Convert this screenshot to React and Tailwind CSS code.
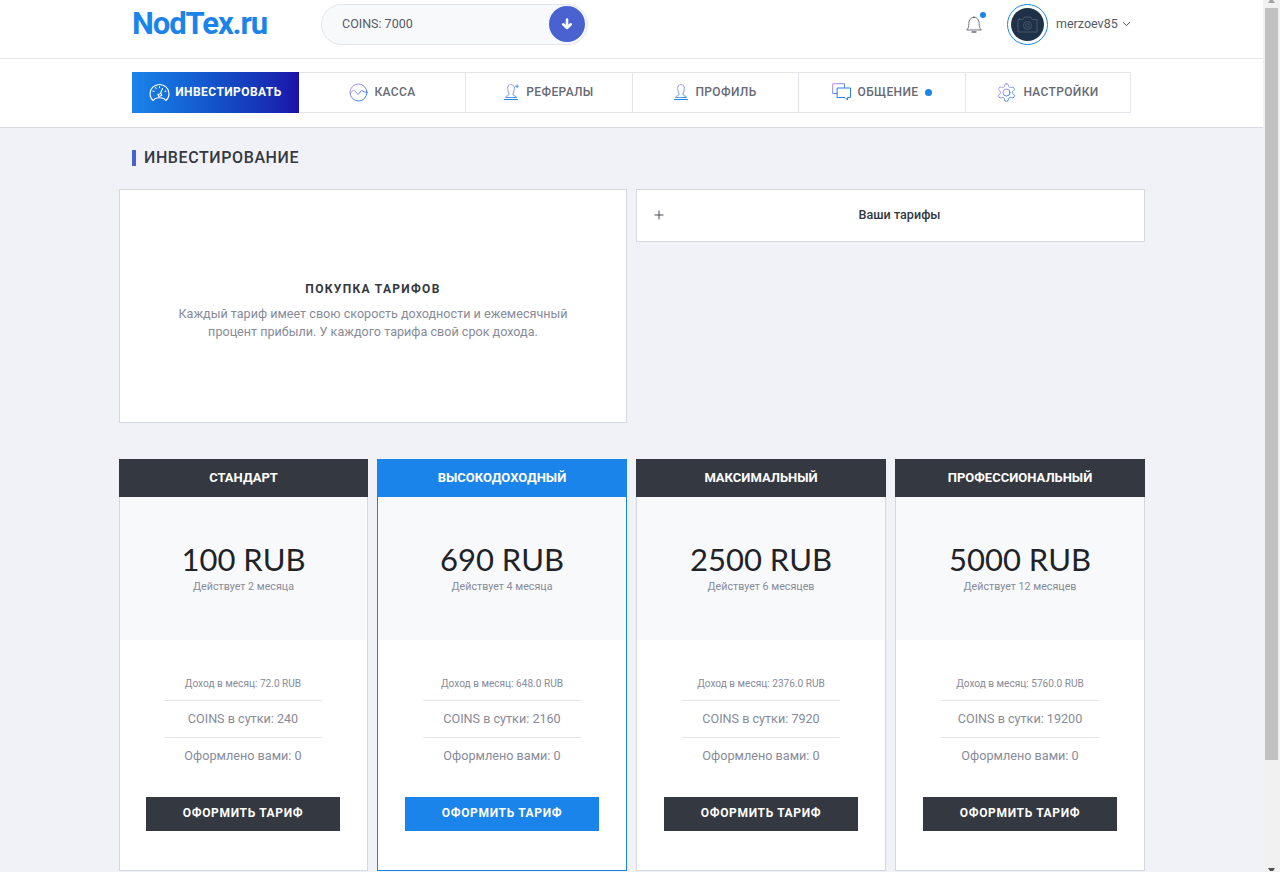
import React from "react";

const Grad = () => (
  <svg width="0" height="0" className="absolute">
    <defs>
      <linearGradient id="ig" x1="0" y1="0" x2="1" y2="1">
        <stop offset="0" stopColor="#c58fe8" />
        <stop offset="1" stopColor="#1a84ea" />
      </linearGradient>
    </defs>
  </svg>
);

const base = { fill: "none", stroke: "url(#ig)", strokeWidth: 1, strokeLinecap: "round", strokeLinejoin: "round" };

const Gauge = () => (
  <svg width="21" height="19" viewBox="0 0 21 19" fill="none" stroke="#fff" strokeWidth="1.1" strokeLinecap="round" strokeLinejoin="round">
    <path d="M4 17.5C2 15.8 1 13.4 1 10.8 1 5.6 5.2 1.5 10.5 1.5S20 5.6 20 10.8c0 2.6-1 5-3 6.7-1-.9-1.6-1.6-2.4-2-1.2-.6-2.6-.8-4.1-.8s-2.900.2-4.100.8c-.8.4-1.400 1.100-2.400 2z" />
    <path d="M9 11.500l3-1 .8 2-3 1zM11.500 10.500l2-5M4 8l1 .5M6.500 4.500l.7.8M10.500 3.500v1M17 8l-1 .5" />
  </svg>
);
const Wave = () => (
  <svg width="19" height="19" viewBox="0 0 19 19" {...base}>
    <circle cx="9.500" cy="9.500" r="8.500" />
    <path d="M1.500 10.500c1.500-3 3-4 4.500-2.500s2 3.500 3.500 3 2-4 3.500-3.500 2 2.500 5 1.500" />
  </svg>
);
const Person = ({ plus }) => (
  <svg width={plus ? 15 : 14} height="16" viewBox={plus ? "0 0 15 16" : "0 0 14 16"} {...base}>
    <path d="M4.200 2C4.900 1 6 .6 7 .6s2.100.4 2.800 1.400c.8 1.200.6 3.300.2 4.900-.3 1.200-1 2-1 3.100 0 1 .6 1.500 1.800 2 1.300.4 1.700.8 1.700 1.500H1.500c0-.7.400-1.100 1.700-1.500 1.200-.5 1.800-1 1.800-2 0-1.100-.7-1.900-1-3.100C3.600 5.300 3.400 3.200 4.200 2z" strokeWidth="0.9" />
    <path d="M.5 15.500h13" stroke="#1a84ea" />
    {plus && <path d="M13 1v2.500M11.700 2.200h2.600" stroke="#1a84ea" strokeWidth="0.8" />}
  </svg>
);
const Chat = () => (
  <svg width="19" height="18" viewBox="0 0 19 18" {...base}>
    <path d="M5 10.500H.7V.7h11.800v4" />
    <path d="M5.500 5h13v9.500h-3v2.500l-2.500-2.500H5.500z" stroke="#2f7fe8" />
  </svg>
);
const Gear = () => (
  <svg width="21" height="21" viewBox="0 0 24 24" className="-mx-[1px]" fill="none" stroke="url(#ig)" strokeWidth="1.100" strokeLinecap="round" strokeLinejoin="round">
    <circle cx="12" cy="12" r="4" />
    <path d="M12.220 2h-.44a2 2 0 0 0-2 2v.180a2 2 0 0 1-1 1.730l-.43.250a2 2 0 0 1-2 0l-.150-.080a2 2 0 0 0-2.730.730l-.220.380a2 2 0 0 0 .730 2.730l.150.100a2 2 0 0 1 1 1.720v.510a2 2 0 0 1-1 1.740l-.150.090a2 2 0 0 0-.730 2.730l.220.380a2 2 0 0 0 2.730.730l.150-.080a2 2 0 0 1 2 0l.430.250a2 2 0 0 1 1 1.730V20a2 2 0 0 0 2 2h.440a2 2 0 0 0 2-2v-.180a2 2 0 0 1 1-1.730l.430-.250a2 2 0 0 1 2 0l.150.080a2 2 0 0 0 2.730-.730l.220-.390a2 2 0 0 0-.730-2.730l-.150-.080a2 2 0 0 1-1-1.740v-.500a2 2 0 0 1 1-1.740l.150-.090a2 2 0 0 0 .730-2.730l-.220-.380a2 2 0 0 0-2.730-.730l-.150.080a2 2 0 0 1-2 0l-.430-.250a2 2 0 0 1-1-1.730V4a2 2 0 0 0-2-2z" />
  </svg>
);

const navItems = [
  { label: "КАССА", icon: <Wave />, w: "w-[167px]" },
  { label: "РЕФЕРАЛЫ", icon: <Person plus />, w: "w-[167px]" },
  { label: "ПРОФИЛЬ", icon: <Person />, w: "w-[166px]" },
  { label: "ОБЩЕНИЕ", icon: <Chat />, w: "w-[167px]", dot: true },
  { label: "НАСТРОЙКИ", icon: <Gear />, w: "w-[165px]" },
];

const plans = [
  { name: "СТАНДАРТ", price: "100 RUB", term: "Действует 2 месяца", income: "72.0", coins: "240", first: true },
  { name: "ВЫСОКОДОХОДНЫЙ", price: "690 RUB", term: "Действует 4 месяца", income: "648.0", coins: "2160", hot: true },
  { name: "МАКСИМАЛЬНЫЙ", price: "2500 RUB", term: "Действует 6 месяцев", income: "2376.0", coins: "7920" },
  { name: "ПРОФЕССИОНАЛЬНЫЙ", price: "5000 RUB", term: "Действует 12 месяцев", income: "5760.0", coins: "19200" },
];

function Plan({ p }) {
  return (
    <div className={`flex h-[412px] flex-col border bg-white ${p.hot ? "border-[#1a84ea]" : "border-[#d5d8e0]"}`}>
      <div className={`-mx-px -mt-px flex h-[38px] shrink-0 items-center justify-center text-[13px] font-bold text-white ${p.hot ? "bg-[#1a84ea]" : "bg-[#343840]"}`}>
        {p.name}
      </div>
      <div className="flex h-[143px] shrink-0 flex-col items-center bg-[#f8f9fb] pt-[42px]">
        <div className="font-['Lato'] text-[31px] leading-[40px] text-[#1f2328]">{p.price}</div>
        <div className="text-[10.700px] leading-[16px] text-[#878b99]">{p.term}</div>
      </div>
      <div className={`mt-[24px] w-[158px] text-center text-[#878b99] ${p.first ? "ml-[44px]" : "mx-auto"}`}>
        <div className="flex h-[37px] items-center justify-center border-b border-[#e3e5ea] pt-[4px] text-[10.100px]">
          Доход в месяц: {p.income} RUB
        </div>
        <div className="flex h-[37px] items-center justify-center border-b border-[#e3e5ea] text-[12.600px]">
          COINS в сутки: {p.coins}
        </div>
        <div className="flex h-[37px] items-center justify-center pb-[1px] text-[12.650px]">Оформлено вами: 0</div>
      </div>
      <div className={`mt-[22px] flex h-[34px] w-[194px] items-center justify-center pb-[2px] text-[12px] font-bold tracking-[0.65px] text-white ${p.first ? "ml-[26px]" : "mx-auto"} ${p.hot ? "bg-[#1a84ea]" : "bg-[#343840]"}`}>
        ОФОРМИТЬ ТАРИФ
      </div>
    </div>
  );
}

export default function App() {
  return (
    <div className="flex h-[872px] overflow-hidden bg-[#f0f2f7] font-['Roboto',sans-serif]">
      <Grad />
      <div className="min-w-0 flex-1">
        <header className="flex h-[59px] items-center border-b border-[#e3e5ea] bg-white pl-[133px]">
          <div className="-ml-px w-[189px] pb-[10px] text-[31px] font-bold leading-[36px] tracking-[-1.100px] text-[#1a84ea]">NodTex.ru</div>
          <div className="mb-[10px] flex h-[41px] w-[267px] items-center justify-between rounded-full border border-[#e3e5ea] bg-[#f8f9fb] pl-[20px] pr-[2px]">
            <span className="text-[12.500px] text-[#555a66]">COINS: 7000</span>
            <span className="flex h-[36px] w-[36px] items-center justify-center rounded-full bg-[#4a62d0]">
              <svg width="12" height="12" viewBox="0 0 12 12" fill="none" stroke="#fff" strokeWidth="2.600" strokeLinecap="round" strokeLinejoin="round">
                <path d="M6 1.500v8M2.200 6.300L6 10 9.800 6.300" />
              </svg>
            </span>
          </div>
          <div className="relative ml-[378px] mb-[10px] flex h-[24px] w-[16px] items-center">
            <svg width="17" height="19" viewBox="0 0 17 19" fill="none" stroke="#666a75" strokeWidth="1" strokeLinecap="round" strokeLinejoin="round">
              <path d="M1 15c1.500-1.500 2-3 2-6.500C3 4.500 5.300 2 8.500 2S14 4.500 14 8.500c0 3.500.5 5 2 6.500z" />
              <path d="M8.500 1v1" />
              <path d="M6.500 17.500h4" strokeWidth="1.500" />
            </svg>
            <span className="absolute right-[-4px] top-[0px] h-[6px] w-[6px] rounded-full bg-[#1a84ea]" />
          </div>
          <div className="ml-[25px] mb-[10px] flex h-[41px] w-[41px] items-center justify-center rounded-full border border-[#1a84ea] bg-white">
            <div className="flex h-[33px] w-[33px] items-center justify-center rounded-full bg-[#1f3146]">
              <svg width="21" height="17" viewBox="0 0 21 17" fill="none" stroke="#46586d" strokeWidth="1">
                <path d="M1 3.500h5l1.500-2.500h6L15 3.500h5v12.500H1z" />
                <path d="M2.500 2v1.500" />
                <circle cx="10.500" cy="9.500" r="4" />
                <circle cx="10.500" cy="9.500" r="1.800" />
              </svg>
            </div>
          </div>
          <span className="ml-[8px] mb-[10px] text-[12.500px] text-[#555a66]">merzoev85</span>
          <svg className="ml-[4px] mb-[10px]" width="9" height="6" viewBox="0 0 9 6" fill="none" stroke="#555a66" strokeWidth="1">
            <path d="M1 1.200l3.500 3.300L8 1.200" />
          </svg>
        </header>

        <nav className="flex h-[69px] items-center border-b border-[#d8dae3] bg-white pb-[2px] pl-[132px]">
          <div className="flex h-[41px]">
            <div className="flex w-[167px] items-center justify-center gap-[5px] bg-gradient-to-r from-[#1a84ea] to-[#1a10a8] text-[12px] font-bold tracking-[0.43px] text-white">
              <Gauge />
              ИНВЕСТИРОВАТЬ
            </div>
            {navItems.map((n) => (
              <div
                key={n.label}
                className={`flex ${n.w} items-center justify-center gap-[7px] border-y border-r border-[#e3e5ea] text-[12px] font-medium tracking-[0.35px] text-[#666a75]`}
              >
                {n.icon}
                {n.label}
                {n.dot && <span className="h-[7px] w-[7px] rounded-full bg-[#1a84ea]" />}
              </div>
            ))}
          </div>
        </nav>

        <main className="pl-[119px] pr-[118px]">
          <h1 className="ml-[13px] mt-[22px] flex h-[16px] items-center border-l-4 border-[#4a62d0] pl-[8px] text-[16px] font-medium tracking-[0.6px] text-[#343840]">
            ИНВЕСТИРОВАНИЕ
          </h1>
          <div className="mt-[23px] grid grid-cols-[508px_509px] items-start gap-[9px]">
            <div className="flex h-[234px] flex-col items-center justify-center border border-[#d5d8e0] bg-white pt-[9px] text-center">
              <div className="text-[12px] font-bold tracking-[1.300px] text-[#343840]">ПОКУПКА ТАРИФОВ</div>
              <p className="mt-[7px] w-[420px] text-[12.600px] leading-[18px] text-[#878b99]">
                Каждый тариф имеет свою скорость доходности и ежемесячный процент прибыли. У каждого тарифа свой срок дохода.
              </p>
            </div>
            <div className="relative flex h-[53px] items-center justify-center border border-[#d5d8e0] bg-white pl-[18px] text-[12.600px] font-medium text-[#343840]">
              <svg className="absolute left-[17px] top-[20px]" width="10" height="10" viewBox="0 0 10 10" stroke="#343840" strokeWidth="0.9">
                <path d="M5 .5v9M.5 5h9" />
              </svg>
              Ваши тарифы
            </div>
          </div>
          <div className="mt-[36px] grid grid-cols-[249px_250px_250px_250px] gap-[9px]">
            {plans.map((p) => (
              <Plan key={p.name} p={p} />
            ))}
          </div>
        </main>
      </div>

      <div className="flex w-[17px] shrink-0 flex-col items-center bg-[#f1f1f1]">
        <svg width="9" height="4" viewBox="0 0 9 4">
          <path d="M1 3h7L6 0H3z" fill="#a3a3a3" />
        </svg>
        <div className="mt-[4px] h-[752px] w-[13px] bg-[#c1c1c1]" />
        <div className="flex-1" />
        <svg width="9" height="4" viewBox="0 0 9 4">
          <path d="M1 0h7L6 3H3z" fill="#505050" />
        </svg>
      </div>
    </div>
  );
}
